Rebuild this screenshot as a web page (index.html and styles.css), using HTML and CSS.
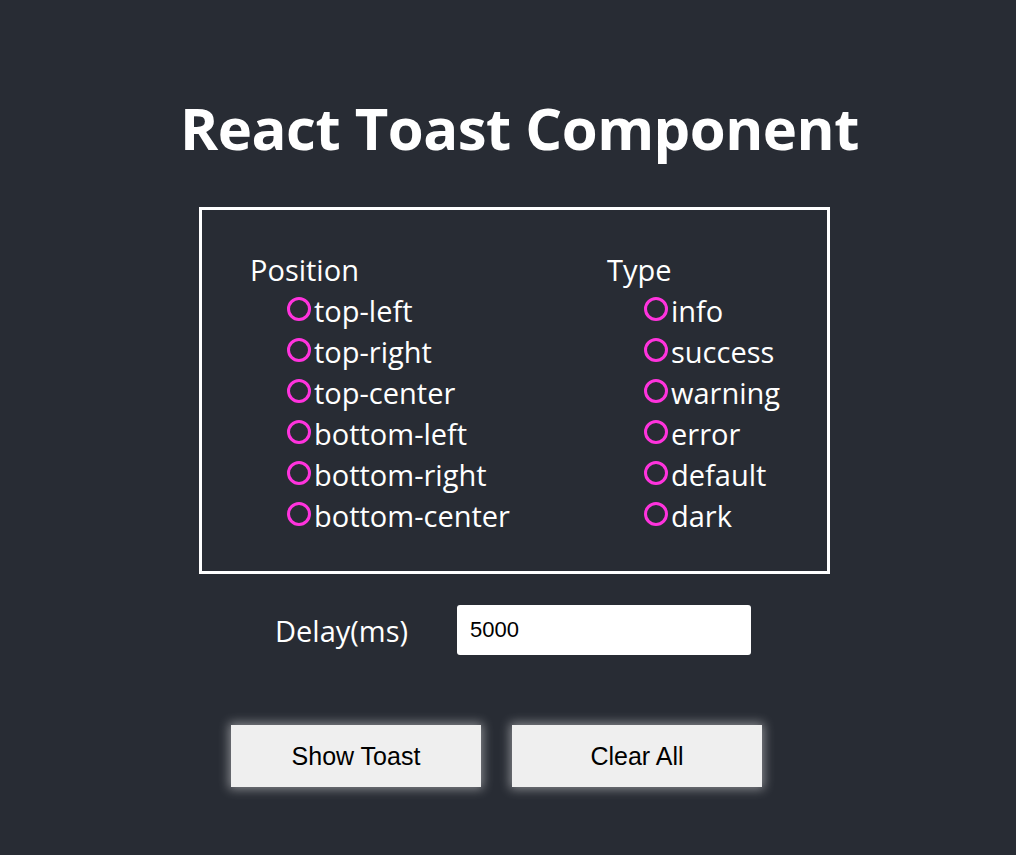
FILE: index.html
```html
<!DOCTYPE html>
<html>
<head>
<meta charset="utf-8">
<link rel="stylesheet" href="styles.css">
</head>
<body>
<div class="app">
  <h1 class="title">React Toast Component</h1>
  <div class="panel">
    <div class="group">
      <div class="group-title">Position</div>
      <label class="opt"><span class="radio"></span>top-left</label>
      <label class="opt"><span class="radio"></span>top-right</label>
      <label class="opt"><span class="radio"></span>top-center</label>
      <label class="opt"><span class="radio"></span>bottom-left</label>
      <label class="opt"><span class="radio"></span>bottom-right</label>
      <label class="opt"><span class="radio"></span>bottom-center</label>
    </div>
    <div class="group">
      <div class="group-title">Type</div>
      <label class="opt"><span class="radio"></span>info</label>
      <label class="opt"><span class="radio"></span>success</label>
      <label class="opt"><span class="radio"></span>warning</label>
      <label class="opt"><span class="radio"></span>error</label>
      <label class="opt"><span class="radio"></span>default</label>
      <label class="opt"><span class="radio"></span>dark</label>
    </div>
  </div>
  <div class="delay-row">
    <span class="delay-label">Delay(ms)</span>
    <input class="delay-input" type="text" value="5000">
  </div>
  <div class="buttons">
    <button class="btn">Show Toast</button>
    <button class="btn">Clear All</button>
  </div>
</div>
</body>
</html>
```

FILE: styles.css
```css
html, body {
  margin: 0;
  padding: 0;
  background: #282c34;
}
body {
  width: 1016px;
  height: 855px;
  overflow: hidden;
  font-family: "Open Sans", "Noto Sans", sans-serif;
  color: #ffffff;
}
.app {
  display: flex;
  flex-direction: column;
}
.title {
  margin: 88px 0 0 180px;
  font-size: 58px;
  line-height: 80px;
  font-weight: 700;
  color: #ffffff;
  letter-spacing: -0.5px;
}
.panel {
  margin: 39px 0 0 199px;
  width: 625px;
  height: 361px;
  border: 3px solid #ffffff;
  display: flex;
  box-sizing: content-box;
}
.group {
  display: flex;
  flex-direction: column;
  padding-top: 40px;
}
.group:first-child {
  padding-left: 48px;
  width: 357px;
}
.group-title {
  font-size: 29px;
  line-height: 40px;
}
.opt {
  display: flex;
  align-items: center;
  padding-left: 37px;
  font-size: 29px;
  line-height: 41px;
  height: 41px;
}
.radio {
  width: 18px;
  height: 18px;
  border: 3px solid #ff33dd;
  border-radius: 50%;
  margin-right: 3px;
  margin-top: -4px;
  flex: none;
}
.delay-row {
  display: flex;
  align-items: center;
  margin: 31px 0 0 275px;
}
.delay-label {
  font-size: 29px;
  width: 182px;
}
.delay-input {
  width: 294px;
  height: 50px;
  box-sizing: border-box;
  border: none;
  border-radius: 3px;
  background: #ffffff;
  padding: 0 13px;
  font-family: "Liberation Sans", Arial, sans-serif;
  font-size: 22px;
  color: #000000;
  outline: none;
}
.buttons {
  display: flex;
  gap: 31px;
  margin: 70px 0 0 231px;
}
.btn {
  width: 250px;
  height: 62px;
  border: none;
  background: #efefef;
  font-family: "Liberation Sans", Arial, sans-serif;
  font-size: 25px;
  color: #000000;
  box-shadow: 0 0 10px 2px rgba(255, 255, 255, 0.45);
  padding: 0;
}
```
